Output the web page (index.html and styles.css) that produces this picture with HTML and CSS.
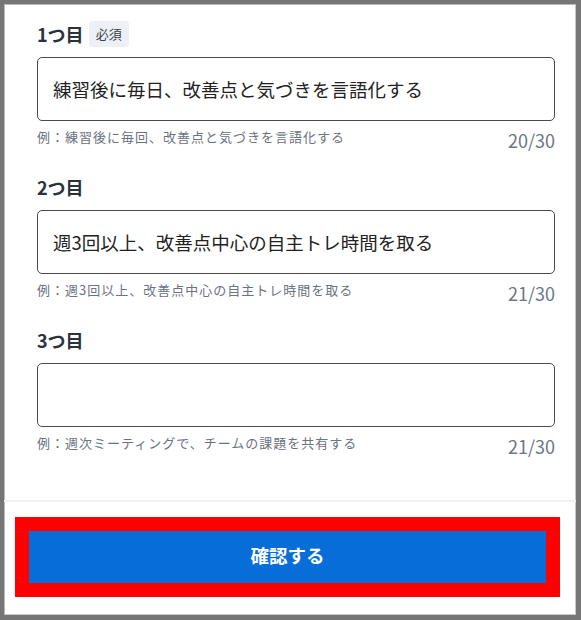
FILE: index.html
```html
<!DOCTYPE html>
<html lang="ja">
<head>
<meta charset="utf-8">
<link rel="stylesheet" href="styles.css">
</head>
<body>
<div class="frame">
  <div class="main">
    <div class="field">
      <div class="label-row"><span class="label">1つ目</span><span class="badge">必須</span></div>
      <div class="input">練習後に毎日、改善点と気づきを言語化する</div>
      <div class="hint-row"><span class="hint">例：練習後に毎回、改善点と気づきを言語化する</span><span class="count">20/30</span></div>
    </div>
    <div class="field">
      <div class="label-row"><span class="label">2つ目</span></div>
      <div class="input">週3回以上、改善点中心の自主トレ時間を取る</div>
      <div class="hint-row"><span class="hint">例：週3回以上、改善点中心の自主トレ時間を取る</span><span class="count">21/30</span></div>
    </div>
    <div class="field">
      <div class="label-row"><span class="label">3つ目</span></div>
      <div class="input"></div>
      <div class="hint-row"><span class="hint">例：週次ミーティングで、チームの課題を共有する</span><span class="count">21/30</span></div>
    </div>
  </div>
  <div class="footer">
    <div class="highlight">
      <button class="confirm">確認する</button>
    </div>
  </div>
</div>
</body>
</html>
```
FILE: styles.css
```css
html, body {
  margin: 0;
  padding: 0;
}
body {
  width: 581px;
  height: 620px;
  background: #777777;
  font-family: "Noto Sans CJK JP", "Noto Sans", sans-serif;
  overflow: hidden;
}
.frame {
  box-sizing: border-box;
  width: 581px;
  height: 620px;
  border-style: solid;
  border-color: #767676;
  border-width: 4px 5px 5px 4px;
  background: #ffffff;
  box-shadow: inset 1px 1px 0 #b9b9b9, inset -1px -1px 0 #c9c9c9;
  display: flex;
  flex-direction: column;
}
.main {
  box-sizing: border-box;
  height: 496px;
  padding: 17px 21px 0 33px;
  display: flex;
  flex-direction: column;
  gap: 21px;
}
.label-row {
  height: 26px;
  display: flex;
  align-items: center;
  gap: 5px;
}
.label {
  font-size: 18px;
  font-weight: 700;
  color: #2a323e;
  line-height: 26px;
}
.badge {
  height: 26px;
  line-height: 26px;
  padding: 0 7px;
  font-size: 13px;
  color: #3a3f47;
  background: #edf1f7;
  border-radius: 3px;
}
.input {
  box-sizing: border-box;
  margin-top: 10px;
  height: 64px;
  border: 1.5px solid #4a4a4a;
  border-radius: 5px;
  padding: 0 15px;
  font-size: 18.5px;
  color: #222222;
  display: flex;
  align-items: center;
}
.hint-row {
  margin-top: 6px;
  height: 26px;
  display: flex;
  justify-content: space-between;
  align-items: flex-start;
}
.hint {
  font-size: 13px;
  line-height: 20px;
  letter-spacing: 1px;
  color: #6b7280;
}
.count {
  font-size: 18px;
  line-height: 26px;
  color: #6b7785;
}
.footer {
  border-top: 2px solid #eef1f6;
  padding: 15px 16px 0 11px;
}
.highlight {
  border: 14px solid #ff0000;
  background: #ff0000;
}
.confirm {
  display: block;
  width: 100%;
  height: 52px;
  border: none;
  margin: 0;
  padding: 0 0 5px 0;
  background: #076dd8;
  color: #ffffff;
  font-family: "Noto Sans CJK JP", "Noto Sans", sans-serif;
  font-size: 18.5px;
  font-weight: 700;
}
```
